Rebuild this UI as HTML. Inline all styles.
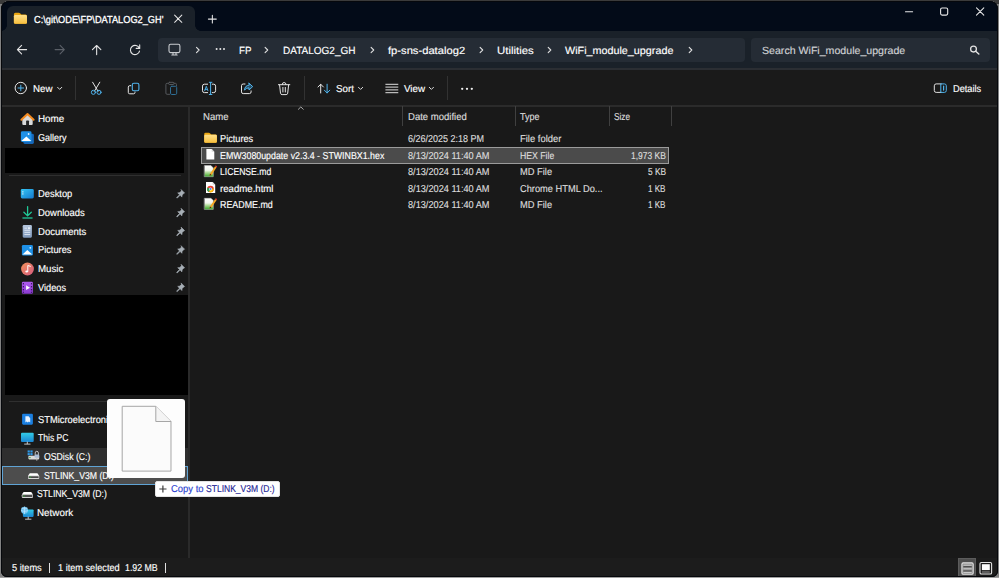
<!DOCTYPE html>
<html lang="en">
<head>
<meta charset="utf-8">
<title>WiFi_module_upgrade - File Explorer</title>
<style>
*{box-sizing:border-box;margin:0;padding:0}
html,body{width:999px;height:578px;overflow:hidden}
body{background:#828282;font-family:"Liberation Sans",sans-serif;font-size:10.5px;color:#fff;position:relative}
.a{position:absolute}
.t{position:absolute;text-rendering:geometricPrecision;-webkit-text-stroke:0.15px currentColor;white-space:nowrap;line-height:14px;height:14px;transform-origin:0 50%}
svg{position:absolute;left:0;top:0;overflow:visible}
#topstrip{left:0;top:0;width:999px;height:1.2px;background:#3b3b3b}
#botstrip{left:0;top:576.5px;width:999px;height:1.5px;background:#a0a0a0}
#win{left:1px;top:1px;width:996.6px;height:575.6px;background:#191919;border-radius:8px 8px 6px 6px;overflow:hidden}
#win>div{position:absolute}
#frame{position:absolute;left:1px;top:1px;width:996.6px;height:575.6px;border:1px solid #06080c;border-radius:8px 8px 6px 6px;pointer-events:none}
#titlebar{left:0;top:0;width:999px;height:29.6px;background:#030b18}
#navbar{left:0;top:29.6px;width:999px;height:39px;background:#1a2129}
#tab{left:6px;top:4.6px;width:188px;height:26px;background:#1a2129;border-radius:6px 6px 0 0}
.foot{width:6px;height:6px;top:23.6px}
#footl{left:0;background:radial-gradient(circle at 0 0,#030b18 5.6px,#1a2129 6.2px)}
#footr{left:194px;background:radial-gradient(circle at 100% 0,#030b18 5.6px,#1a2129 6.2px)}
#addr{left:157px;top:36.5px;width:587px;height:24.9px;background:#252c35;border-radius:4px}
#search{left:750px;top:36.5px;width:238.5px;height:24.9px;background:#252c35;border-radius:4px}
#cmdbar{left:0;top:68.6px;width:999px;height:35.8px;background:#1a1a1a}
#navline{left:0;top:66.9px;width:999px;height:1.9px;background:#2b2e33}
#cmdline{left:0;top:104.2px;width:999px;height:1.9px;background:#2b2b2b}
#status{left:0;top:557px;width:999px;height:20px;background:#1c1c1c}
#leftdiv{left:187.2px;top:105.6px;width:1.6px;height:451.4px;background:#2a2a2a}
.sep{width:1px;background:#323232;top:75px;height:24px}
.black{background:#000}
.hl{background:#2e2e2e}
.line{height:1px;background:#2f2f2f}
.cdiv{width:1px;background:#404040;top:105px;height:20px}

</style>
</head>
<body>
<div class="a" id="topstrip"></div>
<div class="a" id="botstrip"></div>
<div class="a" style="left:0;top:0;width:5px;height:4px;background:#3b3b3b"></div>
<div class="a" style="left:994px;top:0;width:5px;height:4px;background:#3b3b3b"></div>
<div class="a" id="win">
<div id="titlebar"></div>
<div id="navbar"></div>
<div id="tab"></div>
<div class="foot" id="footl"></div>
<div class="foot" id="footr"></div>
<div id="addr"></div>
<div id="search"></div>
<div id="cmdbar"></div>
<div id="navline"></div>
<div id="cmdline"></div>
<div class="sep" style="left:73.9px"></div>
<div class="sep" style="left:303.1px"></div>
<div class="sep" style="left:446.1px"></div>
<div id="status"></div>
<div id="leftdiv"></div>
<!-- left pane blocks -->
<div class="black" style="left:4.3px;top:146.7px;width:178.8px;height:25.1px"></div>
<div class="line" style="left:7.6px;top:174.4px;width:172px"></div>
<div class="black" style="left:4.3px;top:293.5px;width:183.1px;height:100.3px"></div>
<div class="line" style="left:7.6px;top:399.6px;width:172px"></div>
<div class="hl" style="left:1.3px;top:446.5px;width:186px;height:18.4px"></div>
<div style="left:1.3px;top:465.3px;width:185.4px;height:18.8px;background:#4d4d4d;border:1px solid #5fa3d4"></div>
<!-- column dividers -->
<div class="cdiv" style="left:401.3px"></div>
<div class="cdiv" style="left:514px"></div>
<div class="cdiv" style="left:607.8px"></div>
<div class="cdiv" style="left:670.3px"></div>
<!-- selected row -->
<div style="left:200.3px;top:146.2px;width:467.4px;height:17px;background:#4b4b4b;border:1px solid #9b9b9b"></div>
<!-- status view buttons -->
<div style="left:956.7px;top:557.2px;width:18.8px;height:19px;background:#4e4e4e;border:1px solid #5c5c5c;border-bottom:none"></div>
<div style="left:48.4px;top:562.4px;width:1px;height:10px;background:#e0e0e0"></div>
<div style="left:164.2px;top:562.4px;width:1px;height:10px;background:#e0e0e0"></div>
</div>

<svg width="999" height="578" viewBox="0 0 999 578" fill="none" stroke-linecap="round" stroke-linejoin="round">
<defs>
<linearGradient id="gfold" x1="0" y1="0" x2="0" y2="1"><stop offset="0" stop-color="#ffe08a"/><stop offset="1" stop-color="#f7bf3e"/></linearGradient>
<linearGradient id="gdesk" x1="0" y1="0" x2="1" y2="1"><stop offset="0" stop-color="#35c6f4"/><stop offset="1" stop-color="#1479cf"/></linearGradient>
<linearGradient id="gpc" x1="0" y1="0" x2="0" y2="1"><stop offset="0" stop-color="#32cbe6"/><stop offset="1" stop-color="#1b86d2"/></linearGradient>
<linearGradient id="gmus" x1="0" y1="0" x2="1" y2="1"><stop offset="0" stop-color="#f4935a"/><stop offset="1" stop-color="#d45a80"/></linearGradient>
<linearGradient id="gvid" x1="0" y1="0" x2="0" y2="1"><stop offset="0" stop-color="#b05cf0"/><stop offset="1" stop-color="#8a3ad0"/></linearGradient>
<linearGradient id="gdoc" x1="0" y1="0" x2="0" y2="1"><stop offset="0" stop-color="#b4c6dd"/><stop offset="1" stop-color="#8099bb"/></linearGradient>
<linearGradient id="gnpp" x1="0" y1="0" x2="0" y2="1"><stop offset="0" stop-color="#ffffff"/><stop offset="0.42" stop-color="#f2f6ee"/><stop offset="0.62" stop-color="#b4dc9c"/><stop offset="1" stop-color="#35a424"/></linearGradient>
<linearGradient id="gdrv" x1="0" y1="0" x2="0" y2="1"><stop offset="0" stop-color="#ffffff"/><stop offset="1" stop-color="#d0d0d0"/></linearGradient>
</defs>

<!-- ===== title bar ===== -->
<g id="tabfolder">
<path d="M13.9 14.2q0-1.5 1.5-1.5h3.3q.8 0 1.4.6l1.2 1.1h4.2q1.5 0 1.5 1.5v6.4q0 1.5-1.5 1.5H15.4q-1.500 0-1.500-1.500z" fill="#e9a512"/>
<path d="M13.9 16.2q0-1.300 1.300-1.300h10.400q1.400 0 1.400 1.400v6q0 1.500-1.500 1.500H15.400q-1.500 0-1.500-1.500z" fill="url(#gfold)"/>
</g>
<path d="M174.600 15.100l7.200 7.200M181.800 15.100l-7.200 7.200" stroke="#e6e6e6" stroke-width="1.050"/>
<path d="M208.400 19.100h7.900M212.350 15.150v7.900" stroke="#e6e6e6" stroke-width="1.050"/>
<path d="M905.500 11.700h7.100" stroke="#e8e8e8" stroke-width="1.100"/>
<rect x="940.600" y="8" width="7.100" height="7.100" rx="1.500" stroke="#e8e8e8" stroke-width="1.100"/>
<path d="M976.500 7.900l7.300 7.300M983.800 7.900l-7.300 7.300" stroke="#e8e8e8" stroke-width="1.050"/>

<!-- ===== nav bar ===== -->
<path d="M26.600 49.600H17.500M21.600 45.400l-4.200 4.200 4.200 4.200" stroke="#e4e4e4" stroke-width="1.100"/>
<path d="M55.100 49.600h9.100M60.100 45.400l4.200 4.200-4.200 4.200" stroke="#5b6068" stroke-width="1.100"/>
<path d="M96.650 54.600V45.500M92.450 49.700l4.200-4.200 4.200 4.200" stroke="#e4e4e4" stroke-width="1.100"/>
<path d="M139.300 48.300a4.600 4.600 0 1 0 .2 2.800M139.700 44.900v3.500h-3.500" stroke="#e4e4e4" stroke-width="1.100"/>
<g stroke="#c9ccd0" stroke-width="1.100">
<rect x="169" y="44.300" width="10.900" height="8.300" rx="1.600"/>
<path d="M171.800 55h5.400M173 53.100v1.600M176 53.100v1.600"/>
</g>
<g stroke="#e0e0e0" stroke-width="1.100">
<path d="M196.5 47.400l2.600 2.600-2.600 2.600"/>
<path d="M265.1 47.400l2.600 2.600-2.600 2.600"/>
<path d="M371.1 47.400l2.600 2.600-2.600 2.600"/>
<path d="M480.1 47.400l2.600 2.600-2.600 2.600"/>
<path d="M548.2 47.400l2.600 2.600-2.600 2.600"/>
<path d="M689.2 47.400l2.600 2.600-2.600 2.600"/>
</g>
<g fill="#e6e6e6"><circle cx="216.600" cy="49.100" r="1"/><circle cx="220.300" cy="49.100" r="1"/><circle cx="224" cy="49.100" r="1"/></g>
<circle cx="973.500" cy="49.100" r="2.900" stroke="#e2e2e2" stroke-width="1.300"/>
<path d="M975.700 51.300l3.100 2.700" stroke="#e2e2e2" stroke-width="1.500"/>

<!-- ===== command bar ===== -->
<circle cx="20.800" cy="88" r="5.700" stroke="#e6e6e6" stroke-width="1"/>
<path d="M18 88h5.600M20.800 85.200v5.600" stroke="#4fb4ee" stroke-width="1"/>
<g stroke="#d8d8d8" stroke-width="1">
<path d="M57.600 87.300l2.100 2.100 2.100-2.100"/>
<path d="M358.500 87.300l2.100 2.100 2.100-2.100"/>
<path d="M429.300 87.300l2.100 2.100 2.100-2.100"/>
</g>
<!-- cut -->
<path d="M92.600 82.200l5.400 9M99.800 82.200l-5.400 9" stroke="#e6e6e6" stroke-width="1"/>
<circle cx="93.400" cy="92.300" r="2.050" stroke="#4fb4ee" stroke-width="1"/><circle cx="99" cy="92.300" r="2.050" stroke="#4fb4ee" stroke-width="1"/>
<!-- copy -->
<path d="M130.800 85.700h-1.100q-1.400 0-1.400 1.400v5.300q0 1.400 1.400 1.400h3.900q1.400 0 1.400-1.400v-.4" stroke="#e6e6e6" stroke-width="1"/>
<rect x="132.300" y="83.200" width="6.600" height="7.600" rx="1.500" stroke="#4fb4ee" stroke-width="1.100"/>
<!-- paste (disabled) -->
<path d="M169.600 94.300h-2.500q-1.200 0-1.200-1.200v-8.600q0-1.200 1.200-1.200h1.300M174.300 83.300h1q1.200 0 1.200 1.200v1.300" stroke="#55585c" stroke-width="1"/>
<rect x="168.600" y="82.300" width="5.400" height="2.200" rx="1" stroke="#55585c" stroke-width="1"/>
<rect x="170.500" y="86.300" width="6.200" height="8.200" rx="1.300" stroke="#2f6f96" stroke-width="1"/>
<!-- rename -->
<path d="M207.600 84.200h-3.200q-1.900 0-1.900 1.900v4.600q0 1.900 1.900 1.900h3.200M212.300 84.200h1.400q1.900 0 1.900 1.900v4.600q0 1.900-1.900 1.900h-1.400" stroke="#e6e6e6" stroke-width="1"/>
<path d="M210.600 82.400v12M209.300 82.300h2.600M209.300 94.500h2.600" stroke="#4fb4ee" stroke-width="1"/>
<path d="M204.700 90.700l1.600-4.400 1.600 4.400M205.200 89.400h2.200" stroke="#4fb4ee" stroke-width=".9"/>
<!-- share -->
<path d="M245 84h-1.800q-1.700 0-1.700 1.700v6.200q0 1.700 1.700 1.700h6.200q1.700 0 1.700-1.700v-1" stroke="#e6e6e6" stroke-width="1"/>
<path d="M249 83.200l3.700 3.400-3.700 3.400v-2.100q-3.100-.2-4.500 2.300.2-4.600 4.500-5.100z" stroke="#4fb4ee" stroke-width="1" fill="#4fb4ee" fill-opacity=".35"/>
<!-- delete -->
<path d="M278.400 84.700h11.400M282.200 84.500q0-2 1.900-2t1.900 2M279.600 85l.9 8.200q.2 1.400 1.600 1.400h4q1.400 0 1.600-1.400l.9-8.200M282.900 87.400v4.600M285.300 87.400v4.600" stroke="#e6e6e6" stroke-width="1"/>
<!-- sort -->
<path d="M320.700 93V84.300M318 87l2.700-2.800 2.700 2.800" stroke="#e6e6e6" stroke-width="1"/>
<path d="M327.100 84.200v8.700M324.400 90.200l2.700 2.800 2.700-2.800" stroke="#4fb4ee" stroke-width="1"/>
<!-- view -->
<path d="M385.800 84.300h12.100M385.800 87.100h12.100M385.800 89.900h12.100M385.800 92.700h12.100" stroke="#e0e0e0" stroke-width="1"/>
<g fill="#f0f0f0"><circle cx="462.200" cy="88.800" r="1.150"/><circle cx="467" cy="88.800" r="1.150"/><circle cx="471.800" cy="88.800" r="1.150"/></g>
<!-- details -->
<path d="M941.200 83.900h-5q-1.900 0-1.900 1.900v4.700q0 1.900 1.900 1.900h5" stroke="#e0e0e0" stroke-width="1"/>
<path d="M941.200 83.900h3.200q1.900 0 1.900 1.900v4.700q0 1.900-1.900 1.900h-3.200z" stroke="#4fb4ee" stroke-width="1"/>
<path d="M943.600 86.200v3.900" stroke="#4fb4ee" stroke-width="1.200"/>

<!-- ===== column header sort caret ===== -->
<path d="M298.400 109.300l2.400-2.400 2.400 2.400" stroke="#bdbdbd" stroke-width=".9"/>

<!-- ===== left pane icons ===== -->
<!-- home -->
<path d="M22.300 119.400v4.500q0 1.100 1.100 1.100h8.200q1.100 0 1.100-1.100v-4.500l-5.200-4.700z" fill="#d9d9d9"/>
<path d="M26.100 125v-3.700q0-.7.700-.7h1.500q.7 0 .7.700v3.700z" fill="#262626"/>
<path d="M21.400 119.700l6.100-5.600 6.100 5.600" stroke="#f68b1f" stroke-width="2"/>
<!-- gallery -->
<rect x="23.400" y="133.800" width="10.500" height="10.200" rx="1.400" fill="#1667b8"/>
<rect x="20.900" y="131.300" width="10.600" height="10.600" rx="1.400" fill="#1e90e6"/>
<path d="M21.300 140.900l5.100-4.300 4.900 4.300z" fill="#ffffff"/>
<circle cx="28.600" cy="134" r=".9" fill="#dff0ff"/>
<!-- desktop -->
<rect x="20.800" y="189.100" width="13" height="9.300" rx="1.400" fill="url(#gdesk)"/>
<rect x="22.300" y="191.300" width="1.100" height="1.100" fill="#fff"/><rect x="22.300" y="193.400" width="1.100" height="1.100" fill="#fff"/>
<!-- downloads -->
<path d="M27.600 206.600v9M23.900 212.200l3.700 3.700 3.700-3.700" stroke="#20c997" stroke-width="1.300"/>
<path d="M22.900 218h9.200" stroke="#1fae86" stroke-width="1.300"/>
<!-- documents -->
<rect x="22.700" y="225.100" width="9.200" height="12.600" rx="1.100" fill="url(#gdoc)"/>
<path d="M24.400 228.200h2.700M24.400 230.300h5.800M24.400 232.400h5.800M24.400 234.500h5.800" stroke="#e6eef8" stroke-width=".8" stroke-linecap="butt"/>
<rect x="28" y="227.300" width="2.200" height="1.800" fill="#e6eef8"/>
<!-- pictures -->
<rect x="21.900" y="245" width="11" height="10.600" rx="1.300" fill="#1e90e6"/>
<path d="M22.500 254.500l4.800-4.600 5 4.600z" fill="#fff"/>
<circle cx="30.300" cy="247.800" r=".9" fill="#dff0ff"/>
<!-- music -->
<circle cx="27.500" cy="269" r="6.400" fill="url(#gmus)"/>
<path d="M27.800 271.300v-5.800l2.600.8" stroke="#fff" stroke-width="1"/>
<ellipse cx="26.700" cy="271.500" rx="1.400" ry="1.100" fill="#fff"/>
<!-- videos -->
<rect x="21.900" y="281.700" width="11" height="12" rx="1.200" fill="url(#gvid)"/>
<path d="M26.100 285.300l3.900 2.400-3.900 2.400z" fill="#fff"/>
<g fill="#3d1a66"><rect x="22.800" y="283" width="1.200" height="1.400"/><rect x="22.800" y="286" width="1.200" height="1.400"/><rect x="22.800" y="289" width="1.200" height="1.400"/><rect x="22.800" y="291.700" width="1.200" height="1.200"/><rect x="30.900" y="283" width="1.200" height="1.400"/><rect x="30.900" y="286" width="1.200" height="1.400"/><rect x="30.900" y="289" width="1.200" height="1.400"/><rect x="30.900" y="291.700" width="1.200" height="1.200"/></g>
<!-- pins -->
<g id="pins" fill="#a7afb6" stroke="#a7afb6" stroke-width=".55" transform="translate(0.2 -0.5)">
<path id="pin" d="M181.100 190.200l3.300 3.300-.9.500-1.500 1.500-.3 2.100-1.800-1.800-2.800 2.800-.5-.1-.1-.5 2.800-2.800-1.800-1.800 2.100-.3 1.500-1.500z"/>
<use href="#pin" y="18.800"/><use href="#pin" y="37.600"/><use href="#pin" y="56.200"/><use href="#pin" y="74.800"/><use href="#pin" y="93.500"/>
</g>
<!-- ST icon -->
<rect x="22.100" y="413.800" width="10.800" height="10.900" rx="1.100" fill="#1b7fe0"/>
<path d="M25.400 422.600v-6.400h3.200l1.600 2v4.400l-1.300-1-1.100 1-1.200-1z" fill="#e8f2ff"/>
<!-- this pc -->
<rect x="21" y="432.800" width="12.700" height="9.100" rx="1" fill="url(#gpc)"/>
<path d="M27.300 442v1.700M24.600 444.100h5.500" stroke="#d9d9d9" stroke-width=".9"/>
<!-- osdisk -->
<g fill="#2f9bea"><rect x="27.600" y="450.400" width="2.200" height="2.100"/><rect x="30.400" y="450.400" width="2.200" height="2.100"/><rect x="27.600" y="453.100" width="2.200" height="2.100"/><rect x="30.400" y="453.100" width="2.200" height="2.100"/></g>
<rect x="28.400" y="455.800" width="10.800" height="3.600" rx=".8" fill="#d8d8d8"/>
<rect x="29.300" y="457.100" width="1.300" height="1" fill="#2fa52f"/>
<path d="M35.200 454.500v-1.500q0-1.700 1.600-1.700t1.600 1.700v1.500" stroke="#c8c8c8" stroke-width=".9"/>
<rect x="34.600" y="454.400" width="4.600" height="3.400" rx=".6" fill="#a9bdd6"/>
<path d="M36.800 458.200v2.100" stroke="#bcbcbc" stroke-width=".9"/>
<!-- drive 1 -->
<path d="M29.800 473.200h7.600l1.800 2.500H28z" fill="#ffffff"/>
<rect x="28" y="475.600" width="11.200" height="3.400" rx=".8" fill="url(#gdrv)"/>
<rect x="28.600" y="476.300" width="10" height="1.600" fill="#3a3a3a"/>
<rect x="29.500" y="476.600" width="1.300" height="1" fill="#30c030"/>
<!-- drive 2 -->
<path d="M23.600 492.100h7.600l1.800 2.500H21.800z" fill="#ffffff"/>
<rect x="21.800" y="494.500" width="11.200" height="3.400" rx=".8" fill="url(#gdrv)"/>
<rect x="22.400" y="495.200" width="10" height="1.600" fill="#2a2a2a"/>
<rect x="23.300" y="495.500" width="1.300" height="1" fill="#30c030"/>
<!-- network -->
<rect x="22.900" y="509.400" width="10.700" height="7.500" rx=".8" fill="url(#gpc)"/>
<path d="M28.200 517v1.800M25.500 519.200h5.500" stroke="#d9d9d9" stroke-width=".9"/>
<circle cx="24.500" cy="510.300" r="3.500" fill="#6fc3f2"/>
<path d="M22 508.400q2.500 1.300 5 0M21.300 510.800q3.200 1.400 6.400 0M24.500 506.900v6.800" stroke="#c9ebff" stroke-width=".6"/>

<!-- ===== file list icons ===== -->
<path d="M204.200 134.200q0-1.400 1.400-1.400h3.100q.8 0 1.300.5l1.200 1.100h4.300q1.400 0 1.400 1.400v5.600q0 1.400-1.400 1.400h-9.900q-1.400 0-1.400-1.400z" fill="#e9a512"/>
<path d="M204.200 136q0-1.200 1.200-1.200h10.200q1.300 0 1.300 1.300v5.300q0 1.400-1.400 1.400h-9.900q-1.400 0-1.400-1.400z" fill="url(#gfold)"/>
<!-- blank page -->
<path d="M206.400 149.100h5.300l2.600 2.600v7.700h-7.900z" fill="#ffffff"/>
<path d="M211.700 149.100v2.600h2.600z" fill="#d8d8d8"/>
<!-- notepad++ 1 -->
<g id="npp">
<path d="M204.600 165.600h6.400l2.300 2.300v8.800h-8.700z" fill="url(#gnpp)" stroke="#cfcfcf" stroke-width=".5"/>
<path d="M215.100 166.300l1.400 1.200-5 7.400-2 .9.500-2.100z" fill="#f5a623"/>
<path d="M215.100 166.300l1.400 1.200.7-1-1.400-1.200z" fill="#e03030"/>
<path d="M210 173.700l1.500 1.200-2 .9z" fill="#3a2a1a"/>
</g>
<use href="#npp" y="32.700"/>
<!-- chrome page -->
<path d="M206 182.100h6.600l2.600 2.600v8.400H206z" fill="#ffffff"/>
<path d="M212.600 182.100v2.600h2.600z" fill="#d8d8d8"/>
<circle cx="210.500" cy="189" r="3.300" fill="#ea4335"/>
<path d="M210.500 189l-2.900-1.600a3.300 3.300 0 0 0 1.400 4.600z" fill="#34a853"/>
<path d="M210.500 189l-1.500 3a3.300 3.300 0 0 0 4.800-3.400z" fill="#fbbc05"/>
<circle cx="210.500" cy="189" r="1.500" fill="#ffffff"/>
<circle cx="210.500" cy="189" r="1.100" fill="#4285f4"/>

<!-- ===== status bar view buttons ===== -->
<rect x="961.900" y="562.900" width="11.300" height="11.300" rx="1.300" stroke="#e4e4e4" stroke-width="1.100" fill="#8c8c8c"/>
<path d="M963.400 566.700h8.300M963.400 571h8.300" stroke="#3a3a3a" stroke-width=".9" stroke-linecap="butt"/>
<path d="M963.400 565.200h8.300M963.400 568.800h8.300M963.400 572.400h8.300" stroke="#d0d0d0" stroke-width="1" stroke-linecap="butt"/>
<rect x="980" y="562.500" width="11.600" height="11.500" rx="1.300" stroke="#e4e4e4" stroke-width="1.100"/>
<rect x="981.900" y="564.200" width="7.900" height="5.900" fill="#ffffff"/>
<path d="M981.900 572h7.900" stroke="#9a9a9a" stroke-width="1" stroke-linecap="butt"/>
</svg>

<div class="t" id="a0" style="left:34.2px;top:14.00px;font-size:10.2px;color:#ffffff;transform:scaleX(0.9043);-webkit-text-stroke-width:0.3px;">C:\git\ODE\FP\DATALOG2_GH'</div>
<div class="t" id="a1" style="left:239.2px;top:45.00px;font-size:10.4px;color:#ffffff;transform:scaleX(0.9412);">FP</div>
<div class="t" id="a2" style="left:283.2px;top:45.00px;font-size:10.4px;color:#ffffff;transform:scaleX(0.9633);">DATALOG2_GH</div>
<div class="t" id="a3" style="left:387.8px;top:45.00px;font-size:10.4px;color:#ffffff;transform:scaleX(1.0764);">fp-sns-datalog2</div>
<div class="t" id="a4" style="left:497.0px;top:45.00px;font-size:10.4px;color:#ffffff;transform:scaleX(1.0955);">Utilities</div>
<div class="t" id="a5" style="left:565.3px;top:45.00px;font-size:10.4px;color:#ffffff;transform:scaleX(1.0369);">WiFi_module_upgrade</div>
<div class="t" id="a6" style="left:762.3px;top:45.00px;font-size:10.4px;color:#cfd1d4;transform:scaleX(1.0202);">Search WiFi_module_upgrade</div>
<div class="t" id="a7" style="left:33.4px;top:83.00px;font-size:10.0px;color:#ffffff;transform:scaleX(0.9742);">New</div>
<div class="t" id="a8" style="left:336.2px;top:83.00px;font-size:10.0px;color:#ffffff;transform:scaleX(0.9758);">Sort</div>
<div class="t" id="a9" style="left:403.8px;top:83.00px;font-size:10.0px;color:#ffffff;transform:scaleX(0.9814);">View</div>
<div class="t" id="a10" style="left:953.1px;top:83.00px;font-size:10.0px;color:#ffffff;transform:scaleX(0.9222);">Details</div>
<div class="t" id="a11" style="left:37.5px;top:113.00px;font-size:10.0px;color:#ffffff;transform:scaleX(0.9855);">Home</div>
<div class="t" id="a12" style="left:37.5px;top:132.00px;font-size:10.0px;color:#ffffff;transform:scaleX(0.9026);">Gallery</div>
<div class="t" id="a13" style="left:37.5px;top:188.00px;font-size:10.0px;color:#ffffff;transform:scaleX(0.9349);">Desktop</div>
<div class="t" id="a14" style="left:37.5px;top:207.00px;font-size:10.0px;color:#ffffff;transform:scaleX(0.9437);">Downloads</div>
<div class="t" id="a15" style="left:37.5px;top:226.00px;font-size:10.0px;color:#ffffff;transform:scaleX(0.9530);">Documents</div>
<div class="t" id="a16" style="left:37.5px;top:244.00px;font-size:10.0px;color:#ffffff;transform:scaleX(0.9246);">Pictures</div>
<div class="t" id="a17" style="left:37.5px;top:263.00px;font-size:10.0px;color:#ffffff;transform:scaleX(0.9722);">Music</div>
<div class="t" id="a18" style="left:37.5px;top:282.00px;font-size:10.0px;color:#ffffff;transform:scaleX(0.9209);">Videos</div>
<div class="t" id="a19" style="left:37.5px;top:414.00px;font-size:10.0px;color:#ffffff;transform:scaleX(0.9350);">STMicroelectronics</div>
<div class="t" id="a20" style="left:37.5px;top:432.00px;font-size:10.0px;color:#ffffff;transform:scaleX(0.8576);">This PC</div>
<div class="t" id="a21" style="left:43.5px;top:451.00px;font-size:10.0px;color:#ffffff;transform:scaleX(0.8698);">OSDisk (C:)</div>
<div class="t" id="a22" style="left:43.5px;top:470.00px;font-size:10.0px;color:#ffffff;transform:scaleX(0.8675);">STLINK_V3M (D:)</div>
<div class="t" id="a23" style="left:37.2px;top:488.00px;font-size:10.0px;color:#ffffff;transform:scaleX(0.8675);">STLINK_V3M (D:)</div>
<div class="t" id="a24" style="left:37.2px;top:507.00px;font-size:10.0px;color:#ffffff;transform:scaleX(0.9840);">Network</div>
<div class="t" id="a25" style="left:203.2px;top:111.00px;font-size:10.0px;color:#dcdcdc;transform:scaleX(0.9593);">Name</div>
<div class="t" id="a26" style="left:407.6px;top:111.00px;font-size:10.0px;color:#dcdcdc;transform:scaleX(0.9530);">Date modified</div>
<div class="t" id="a27" style="left:520.3px;top:111.00px;font-size:10.0px;color:#dcdcdc;transform:scaleX(0.8991);">Type</div>
<div class="t" id="a28" style="left:614.2px;top:111.00px;font-size:10.0px;color:#dcdcdc;transform:scaleX(0.8276);">Size</div>
<div class="t" id="a29" style="left:219.8px;top:133.00px;font-size:10.0px;color:#ffffff;transform:scaleX(0.9190);">Pictures</div>
<div class="t" id="a30" style="left:219.8px;top:150.00px;font-size:10.0px;color:#ffffff;transform:scaleX(0.8824);">EMW3080update v2.3.4 - STWINBX1.hex</div>
<div class="t" id="a31" style="left:219.9px;top:166.00px;font-size:10.0px;color:#ffffff;transform:scaleX(0.8610);">LICENSE.md</div>
<div class="t" id="a32" style="left:219.9px;top:183.00px;font-size:10.0px;color:#ffffff;transform:scaleX(0.9626);">readme.html</div>
<div class="t" id="a33" style="left:219.9px;top:199.00px;font-size:10.0px;color:#ffffff;transform:scaleX(0.8881);">README.md</div>
<div class="t" id="a34" style="left:407.6px;top:133.00px;font-size:10.0px;color:#dcdcdc;transform:scaleX(0.9004);">6/26/2025 2:18 PM</div>
<div class="t" id="a35" style="left:407.6px;top:150.00px;font-size:10.0px;color:#dcdcdc;transform:scaleX(0.9180);">8/13/2024 11:40 AM</div>
<div class="t" id="a36" style="left:407.6px;top:166.00px;font-size:10.0px;color:#dcdcdc;transform:scaleX(0.9180);">8/13/2024 11:40 AM</div>
<div class="t" id="a37" style="left:407.6px;top:183.00px;font-size:10.0px;color:#dcdcdc;transform:scaleX(0.9180);">8/13/2024 11:40 AM</div>
<div class="t" id="a38" style="left:407.6px;top:199.00px;font-size:10.0px;color:#dcdcdc;transform:scaleX(0.9180);">8/13/2024 11:40 AM</div>
<div class="t" id="a39" style="left:520.3px;top:133.00px;font-size:10.0px;color:#dcdcdc;transform:scaleX(0.9429);">File folder</div>
<div class="t" id="a40" style="left:520.3px;top:150.00px;font-size:10.0px;color:#dcdcdc;transform:scaleX(0.8694);">HEX File</div>
<div class="t" id="a41" style="left:520.3px;top:166.00px;font-size:10.0px;color:#dcdcdc;transform:scaleX(0.9317);">MD File</div>
<div class="t" id="a42" style="left:520.3px;top:183.00px;font-size:10.0px;color:#dcdcdc;transform:scaleX(0.9271);">Chrome HTML Do...</div>
<div class="t" id="a43" style="left:520.3px;top:199.00px;font-size:10.0px;color:#dcdcdc;transform:scaleX(0.9317);">MD File</div>
<div class="t" id="a44" style="left:631.0px;top:150.00px;font-size:10.0px;color:#dcdcdc;transform:scaleX(0.8480);">1,973 KB</div>
<div class="t" id="a45" style="left:647.8px;top:166.00px;font-size:10.0px;color:#dcdcdc;transform:scaleX(0.8346);">5 KB</div>
<div class="t" id="a46" style="left:648.4px;top:183.00px;font-size:10.0px;color:#dcdcdc;transform:scaleX(0.8069);">1 KB</div>
<div class="t" id="a47" style="left:648.4px;top:199.00px;font-size:10.0px;color:#dcdcdc;transform:scaleX(0.8069);">1 KB</div>
<div class="t" id="a48" style="left:11.8px;top:562.00px;font-size:10.0px;color:#ffffff;transform:scaleX(0.9214);">5 items</div>
<div class="t" id="a49" style="left:57.8px;top:562.00px;font-size:10.0px;color:#ffffff;transform:scaleX(0.9173);">1 item selected</div>
<div class="t" id="a50" style="left:124.8px;top:562.00px;font-size:10.0px;color:#ffffff;transform:scaleX(0.8779);">1.92 MB</div>
<div class="a" style="left:107.4px;top:399.4px;width:77.9px;height:78.8px;background:#fdfdfd;border-radius:3px"></div>
<svg width="999" height="578" viewBox="0 0 999 578">
<path d="M122.2 406.3h33.6l15.2 15.2v49.6h-48.8z" fill="#fbfbfb" stroke="#a6a6a6" stroke-width="1"/>
<path d="M155.8 406.3v15.2h15.2" fill="#f4f4f4" stroke="#a6a6a6" stroke-width="1"/>
</svg>
<div class="a" style="left:155px;top:481px;width:124.6px;height:16.2px;background:#ffffff;border-radius:2px;border:1px solid #e4e4e4"></div>
<svg width="999" height="578" viewBox="0 0 999 578">
<path d="M159.3 489h7.2M162.9 485.4v7.2" stroke="#3c3c3c" stroke-width="1.2" fill="none"/>
</svg>

<div class="t" id="b0" style="left:170.8px;top:483.00px;font-size:10.0px;color:#2b3fd0;transform:scaleX(0.9429);">Copy to</div>
<div class="t" id="b1" style="left:205.8px;top:483.00px;font-size:10.0px;color:#1d2494;transform:scaleX(0.8526);">STLINK_V3M (D:)</div>
<div id="frame"></div>
</body>
</html>
